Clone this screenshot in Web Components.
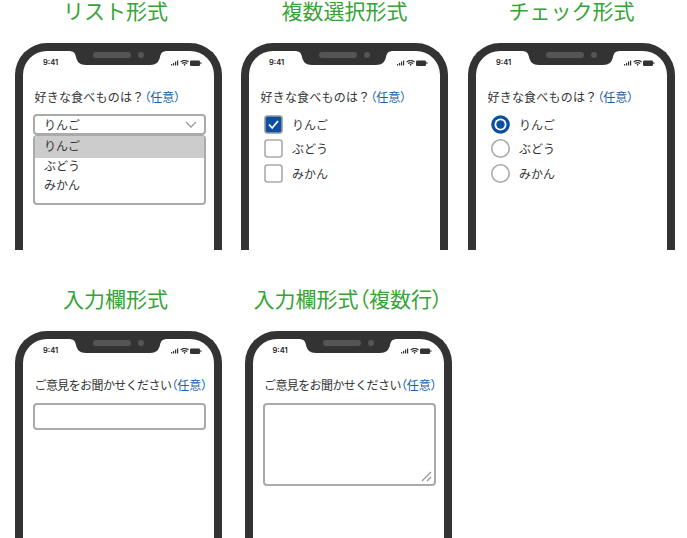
<!DOCTYPE html>
<html lang="ja">
<head>
<meta charset="utf-8">
<title>フォーム形式</title>
<style>
  html, body { margin: 0; background: #fff; }
  body { font-family: "Noto Sans CJK JP", "Noto Sans", sans-serif; color: #333; overflow: hidden; height: 538px; }
</style>
</head>
<body>
<demo-row top="0" left="15">
  <demo-phone heading="リスト形式" gap="19" nudge="6">
    <demo-question spacing="0.2">好きな食べものは？</demo-question>
    <demo-select value="りんご">
      <span>りんご</span><span>ぶどう</span><span>みかん</span>
    </demo-select>
  </demo-phone>
  <demo-phone heading="複数選択形式" gap="20">
    <demo-question spacing="0.2">好きな食べものは？</demo-question>
    <demo-choice type="checkbox" checked>りんご</demo-choice>
    <demo-choice type="checkbox">ぶどう</demo-choice>
    <demo-choice type="checkbox">みかん</demo-choice>
  </demo-phone>
  <demo-phone heading="チェック形式">
    <demo-question spacing="0.2">好きな食べものは？</demo-question>
    <demo-choice type="radio" checked>りんご</demo-choice>
    <demo-choice type="radio">ぶどう</demo-choice>
    <demo-choice type="radio">みかん</demo-choice>
  </demo-phone>
</demo-row>
<demo-row top="38" left="15">
  <demo-phone heading="入力欄形式" gap="22.5" nudge="6">
    <demo-question spacing="-0.6">ご意見をお聞かせください</demo-question>
    <demo-field></demo-field>
  </demo-phone>
  <demo-phone heading="入力欄形式（複数行）">
    <demo-question spacing="-0.6">ご意見をお聞かせください</demo-question>
    <demo-field multiline></demo-field>
  </demo-phone>
</demo-row>

<script>
const phoneTemplate = document.createElement('template');
phoneTemplate.innerHTML = `
  <style>
    :host {
      display: block;
      width: 207px;
    }

    h2 {
      margin: 0;
      height: 43px;
      font-family: "Liberation Sans", "Noto Sans CJK JP", sans-serif;
      font-size: 21px;
      font-weight: 400;
      line-height: 24px;
      color: #35a335;
      text-align: center;
      white-space: nowrap;
    }

    h2 span {
      font-feature-settings: "palt";
    }

    .phone {
      position: relative;
      box-sizing: border-box;
      height: 207px;
      border: 8px solid #333;
      border-bottom: none;
      border-radius: 32px 32px 0 0;
      background: #fff;
    }

    .notch {
      position: absolute;
      left: 45px;
      top: -1px;
      width: 100px;
      height: 16px;
    }

    .status {
      display: flex;
      justify-content: space-between;
      align-items: center;
      height: 8px;
      padding: 8px 12px 0 20px;
      font: 600 7.5px/8px "Inter", "Liberation Sans", sans-serif;
      color: #222;
    }

    .content {
      padding: 21px 8px 0 10px;
    }
  </style>

  <h2></h2>
  <div class="phone">
    <svg class="notch" viewBox="0 0 100 16" aria-hidden="true">
      <path d="M0 0H100V1C94 1 93 3 92 7C91 12 88 15 82 15H18C12 15 9 12 8 7C7 3 6 1 0 1Z" fill="#333"/>
      <rect x="25" y="2" width="38" height="6" rx="3" fill="#555"/>
      <circle cx="73" cy="5" r="3" fill="#555"/>
    </svg>
    <div class="status">
      <span>9:41</span>
      <svg width="31" height="7" viewBox="0 0 31 7" aria-hidden="true">
        <g fill="#333">
          <rect x="0" y="4" width="1.2" height="1.5"/>
          <rect x="2" y="3" width="1.2" height="2.5"/>
          <rect x="4" y="1.5" width="1.2" height="4"/>
          <rect x="6" y=".5" width="1.2" height="5"/>
          <rect x="19" y=".5" width="10" height="5.4" rx="1.2"/>
          <rect x="29.4" y="2.1" width="1" height="2"/>
        </g>
        <path d="M9.6 2.1C12.2 -.1 15 -.1 17.6 2.1M11 3.6C12.7 2.3 14.5 2.3 16.2 3.6" fill="none" stroke="#333" stroke-width="1.1"/>
        <path d="M12.6 4.6L13.6 3.8 14.6 4.6 13.6 5.9Z" fill="#333"/>
      </svg>
    </div>
    <div class="content"><slot></slot></div>
  </div>
`;

class DemoPhone extends HTMLElement {
  constructor() {
    super();
    this.attachShadow({ mode: 'open' });
    this.shadowRoot.appendChild(phoneTemplate.content.cloneNode(true));
    // parens are narrow in the heading, the rest keeps full width
    const parts = this.getAttribute('heading').split(/([（）])/);
    const heading = this.shadowRoot.querySelector('h2');
    for (const part of parts) {
      if (part === '（' || part === '）') {
        const paren = document.createElement('span');
        paren.textContent = part;
        heading.appendChild(paren);
      } else {
        heading.appendChild(document.createTextNode(part));
      }
    }
    heading.style.paddingRight = (this.getAttribute('nudge') || 0) + 'px';
    this.style.marginRight = (this.getAttribute('gap') || 0) + 'px';
  }
}

class DemoRow extends HTMLElement {
  constructor() {
    super();
    this.attachShadow({ mode: 'open' });
    this.shadowRoot.innerHTML = `
      <style>
        :host { display: flex; }
      </style>
      <slot></slot>
    `;
    this.style.paddingTop = this.getAttribute('top') + 'px';
    this.style.paddingLeft = this.getAttribute('left') + 'px';
  }
}

class DemoQuestion extends HTMLElement {
  constructor() {
    super();
    this.attachShadow({ mode: 'open' });
    this.shadowRoot.innerHTML = `
      <style>
        :host {
          display: block;
          height: 18px;
          margin: 0 -2px 9px 1.5px;
          font-size: 12px;
          line-height: 18px;
          color: #333;
          white-space: nowrap;
        }

        .text {
          letter-spacing: ${this.getAttribute('spacing') || 0}px;
        }

        .note {
          color: #1a5ea8;
          font-feature-settings: "palt";
        }
      </style>
      <span class="text"><slot></slot></span><span class="note">（任意）</span>
    `;
  }
}

class DemoSelect extends HTMLElement {
  constructor() {
    super();
    this.attachShadow({ mode: 'open' });
    this.shadowRoot.innerHTML = `
      <style>
        :host {
          display: block;
          margin-top: -1px;
          font-size: 12px;
          color: #333;
        }

        .box {
          box-sizing: border-box;
          display: flex;
          justify-content: space-between;
          align-items: center;
          height: 21px;
          padding: 0 7px 0 9px;
          border: 2px solid #aaa;
          border-radius: 4px;
          line-height: 14px;
        }

        .list {
          box-sizing: border-box;
          height: 70px;
          border: 2px solid #aaa;
          border-top-width: 1px;
          border-radius: 4px;
          overflow: hidden;
        }

        ::slotted(span) {
          display: block;
          height: 19px;
          padding-left: 9px;
          line-height: 19px;
        }

        ::slotted(span:first-child) {
          height: 22px;
          margin-bottom: -2px;
          line-height: 20px;
          background: #ccc;
        }
      </style>
      <div class="box">
        <span class="value"></span>
        <svg width="12" height="7" viewBox="0 0 12 7" aria-hidden="true">
          <path d="M1 1L6 6 11 1" fill="none" stroke="#999" stroke-width="1.3"/>
        </svg>
      </div>
      <div class="list"><slot></slot></div>
    `;
    this.shadowRoot.querySelector('.value').textContent = this.getAttribute('value');
  }
}

class DemoChoice extends HTMLElement {
  constructor() {
    super();
    const radio = this.getAttribute('type') === 'radio';
    const checked = this.hasAttribute('checked');
    this.attachShadow({ mode: 'open' });
    this.shadowRoot.innerHTML = `
      <style>
        :host {
          display: flex;
          align-items: center;
          gap: 9px;
          height: 24.5px;
          margin-left: 5px;
          font-size: 12px;
          color: #333;
        }

        :host(:first-of-type) {
          margin-top: -3px;
        }

        svg {
          flex: none;
        }
      </style>
      <svg width="19" height="19" viewBox="0 0 19 19" aria-hidden="true">${radio ? this.radioMark(checked) : this.checkMark(checked)}</svg>
      <slot></slot>
    `;
  }

  radioMark(checked) {
    if (checked) {
      return '<circle cx="9.5" cy="9.5" r="9.3" fill="#0b4ea2"/><circle cx="9.5" cy="9.5" r="6" fill="#fff"/><circle cx="9.5" cy="9.5" r="4.2" fill="#0b4ea2"/>';
    }
    return '<circle cx="9.5" cy="9.5" r="8.7" fill="#fff" stroke="#aaa" stroke-width="1.6"/>';
  }

  checkMark(checked) {
    if (checked) {
      return '<rect x="1" y="1" width="17" height="17" rx="2.5" fill="#0b4ea2" stroke="#999" stroke-width="1.6"/><path d="M5 9.5L8.2 13 14 6" fill="none" stroke="#fff" stroke-width="1.8"/>';
    }
    return '<rect x="1" y="1" width="17" height="17" rx="2.5" fill="#fff" stroke="#aaa" stroke-width="1.6"/>';
  }
}

class DemoField extends HTMLElement {
  constructor() {
    super();
    const multiline = this.hasAttribute('multiline');
    this.attachShadow({ mode: 'open' });
    this.shadowRoot.innerHTML = `
      <style>
        :host {
          display: block;
        }

        .box {
          position: relative;
          box-sizing: border-box;
          height: ${multiline ? 83 : 27}px;
          border: 2px solid #aaa;
          border-radius: 4px;
        }

        svg {
          position: absolute;
          right: 2px;
          bottom: 2px;
        }
      </style>
      <div class="box">
        ${multiline ? '<svg width="11" height="11" viewBox="0 0 11 11" aria-hidden="true"><path d="M1 10L10 1M6 10L10 6" stroke="#999" stroke-width="1.2"/></svg>' : ''}
      </div>
    `;
  }
}

customElements.define('demo-phone', DemoPhone);
customElements.define('demo-row', DemoRow);
customElements.define('demo-question', DemoQuestion);
customElements.define('demo-select', DemoSelect);
customElements.define('demo-choice', DemoChoice);
customElements.define('demo-field', DemoField);
</script>
</body>
</html>
